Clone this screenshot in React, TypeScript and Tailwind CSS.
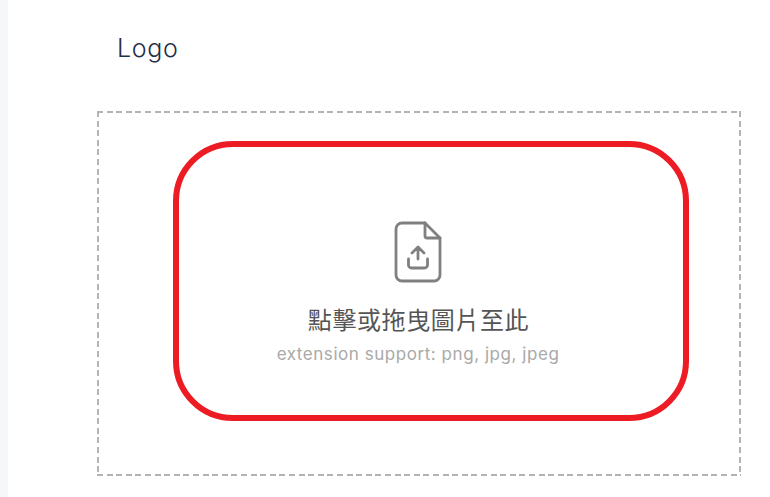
export default function App() {
  return (
    <div className="flex h-[497px] w-[770px] overflow-hidden bg-white font-['Inter','Noto_Sans_CJK_TC',sans-serif]">
      <div className="h-full w-2 shrink-0 bg-[#f6f7f9]" />
      <main className="flex-1 pl-[89px] pr-[29px]">
        <h1 className="ml-5 pt-[32px] text-[25px] leading-[32px] font-light tracking-[0.7px] text-[#1f2f4a]">Logo</h1>
        <div className="relative mt-[47px] flex h-[365px] w-[644px] flex-col items-center bg-[repeating-linear-gradient(90deg,#b4b4b4_0_6px,transparent_6px_9.6px),repeating-linear-gradient(90deg,#b4b4b4_0_6px,transparent_6px_9.6px),repeating-linear-gradient(180deg,#b4b4b4_0_6px,transparent_6px_9.6px),repeating-linear-gradient(180deg,#b4b4b4_0_6px,transparent_6px_9.6px)] bg-[length:100%_2px,100%_2px,2px_100%,2px_100%] bg-[position:0_0,0_100%,0_0,100%_0] bg-no-repeat pt-[110px]">
          <svg width="48" height="62" viewBox="0 0 48 62" fill="none" stroke="#808080" strokeWidth="2.8" strokeLinecap="round" strokeLinejoin="round" className="ml-[-2px]">
            <path d="M31 2H8a6 6 0 0 0-6 6v46a6 6 0 0 0 6 6h32a6 6 0 0 0 6-6V17Z" />
            <path d="M31 2v13a2 2 0 0 0 2 2h13" />
            <path d="M24 38V26.5M18 32l6-6 6 6" />
            <path d="M14.5 38v6a3 3 0 0 0 3 3h13a3 3 0 0 0 3-3v-6" />
          </svg>
          <p className="mt-[22px] ml-[-1px] text-[24px] leading-[32px] tracking-[0.6px] text-[#555555]">點擊或拖曳圖片至此</p>
          <p className="mt-[5px] ml-[-2px] text-[17px] leading-[24px] font-normal tracking-[0.55px] text-[#a9a9a9]">extension support: png, jpg, jpeg</p>
          <div className="absolute left-[76px] top-[30px] h-[280px] w-[516px] rounded-[60px] border-[6px] border-[#ed1c24]" />
        </div>
      </main>
    </div>
  );
}
